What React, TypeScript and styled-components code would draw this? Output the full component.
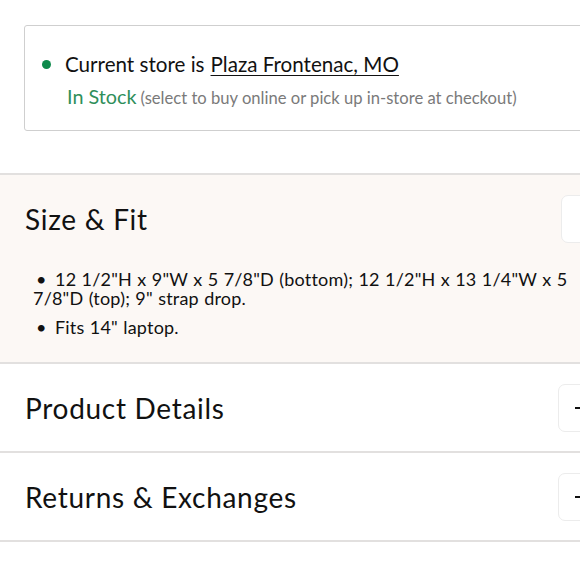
import React from "react";
import styled, { createGlobalStyle } from "styled-components";

const Global = createGlobalStyle`
  html, body { margin: 0; padding: 0; background: #fff; overflow: hidden; }
  body { width: 580px; height: 580px; font-family: Lato, "Open Sans", sans-serif; color: #111; }
`;

const Page = styled.div`
  width: 610px;
  padding-top: 25px;
`;

const StoreBox = styled.div`
  margin-left: 24px;
  height: 106px;
  box-sizing: border-box;
  border: 1.5px solid #cfcfcf;
  border-radius: 3px;
  padding: 25px 0 0 17px;
  display: flex;
  flex-direction: column;
  gap: 7px;
`;

const StoreLine = styled.div`
  display: flex;
  align-items: center;
  font-size: 20.6px;
  line-height: 26px;
  color: #111;
`;

const Dot = styled.span`
  width: 9px;
  height: 9px;
  border-radius: 50%;
  background: #0e8a4c;
  margin-right: 14px;
`;

const StoreLink = styled.a`
  color: #111;
  text-decoration: underline;
  text-underline-offset: 3px;
  text-decoration-thickness: 1px;
  margin-left: 6px;
`;

const StockLine = styled.div`
  padding-left: 25px;
  display: flex;
  align-items: baseline;
  gap: 4px;
`;

const InStock = styled.span`
  color: #2f8f5b;
  font-size: 19.8px;
`;

const StockNote = styled.span`
  color: #7a7a7a;
  font-size: 16.6px;
`;

const Section = styled.section<{ $tinted?: boolean }>`
  background: ${(p) => (p.$tinted ? "#fcf8f5" : "#fff")};
  border-top: 2px solid #e2e0df;
`;

const SectionList = styled.div`
  margin-top: 42px;
  border-bottom: 2px solid #e2e0df;
`;

const Header = styled.div<{ $height: number }>`
  height: ${(p) => p.$height}px;
  display: flex;
  align-items: center;
  justify-content: space-between;
  padding-left: 25px;
`;

const Title = styled.h2`
  margin: 0;
  font-size: 28px;
  font-weight: 400;
  letter-spacing: 0.7px;
  color: #111;
`;

const ToggleButton = styled.button<{ $offset: number }>`
  width: 48px;
  height: 48px;
  margin-right: ${(p) => p.$offset}px;
  border: 1px solid #ececec;
  border-radius: 7px;
  background: #fff;
  display: flex;
  align-items: center;
  justify-content: center;
  padding: 0;
  color: #111;
  font-size: 22px;
`;

const BulletList = styled.ul`
  margin: 0;
  padding: 7px 0 25px 33px;
  list-style: none;
  width: 570px;
  box-sizing: border-box;
  display: flex;
  flex-direction: column;
  gap: 10px;
`;

const Bullet = styled.li`
  font-size: 18px;
  line-height: 19px;
  letter-spacing: 0.2px;
  word-spacing: 0.5px;
  color: #111;
  &::before {
    content: "•";
    display: inline-block;
    width: 22px;
    padding-left: 3px;
    box-sizing: border-box;
  }
`;

const Plus = () => (
  <svg width="16" height="16" viewBox="0 0 16 16">
    <path d="M1 8h14M8 1v14" stroke="#111" strokeWidth="2" />
  </svg>
);

export default function App() {
  return (
    <>
      <Global />
      <Page>
        <StoreBox>
          <StoreLine>
            <Dot />
            Current store is
            <StoreLink>Plaza Frontenac, MO</StoreLink>
          </StoreLine>
          <StockLine>
            <InStock>In Stock</InStock>
            <StockNote>(select to buy online or pick up in-store at checkout)</StockNote>
          </StockLine>
        </StoreBox>
        <SectionList>
          <Section $tinted>
            <Header $height={88}>
              <Title>Size &amp; Fit</Title>
              <ToggleButton $offset={1} aria-label="collapse" />
            </Header>
            <BulletList>
              <Bullet>12 1/2"H x 9"W x 5 7/8"D (bottom); 12 1/2"H x 13 1/4"W x 5 7/8"D (top); 9" strap drop.</Bullet>
              <Bullet>Fits 14" laptop.</Bullet>
            </BulletList>
          </Section>
          <Section>
            <Header $height={87}>
              <Title>Product Details</Title>
              <ToggleButton $offset={4} aria-label="expand"><Plus /></ToggleButton>
            </Header>
          </Section>
          <Section>
            <Header $height={87}>
              <Title>Returns &amp; Exchanges</Title>
              <ToggleButton $offset={4} aria-label="expand"><Plus /></ToggleButton>
            </Header>
          </Section>
        </SectionList>
      </Page>
    </>
  );
}
